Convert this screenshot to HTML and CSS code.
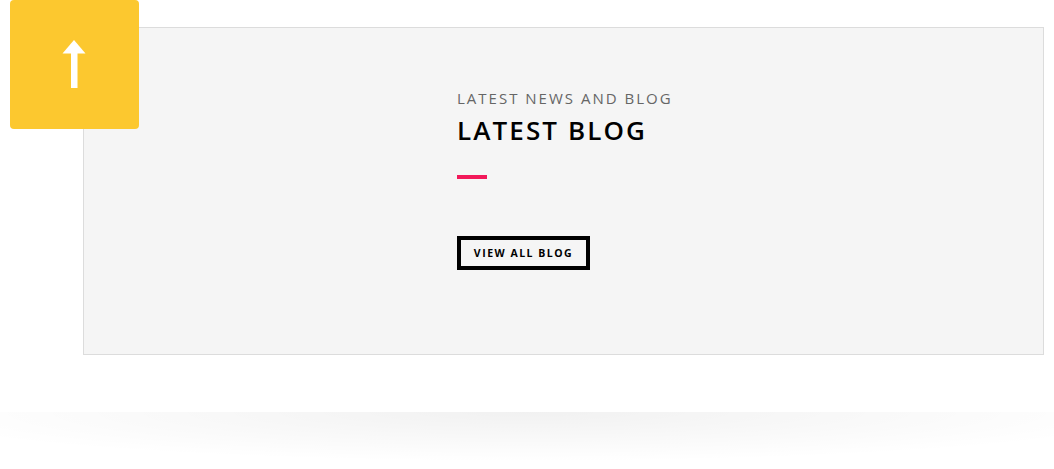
FILE: index.html
```html
<!DOCTYPE html>
<html>
<head>
<meta charset="utf-8">
<link rel="stylesheet" href="styles.css">
</head>
<body>
<div class="page">
  <a class="to-top" href="#">
    <svg width="129" height="129" viewBox="0 0 129 129">
      <polygon points="52.5,53.5 64,40 75.5,53.5" fill="#fff"/>
      <rect x="61" y="52" width="6.5" height="36" fill="#fff"/>
    </svg>
  </a>
  <section class="panel">
    <div class="panel-content">
      <p class="eyebrow">LATEST NEWS AND BLOG</p>
      <h2 class="title">LATEST BLOG</h2>
      <div class="accent"></div>
      <a class="btn" href="#">VIEW ALL BLOG</a>
    </div>
  </section>
  <div class="shadow"></div>
</div>
</body>
</html>
```
FILE: styles.css
```css
html, body {
  margin: 0;
  padding: 0;
  background: #fff;
}
body {
  font-family: "Open Sans", "Liberation Sans", sans-serif;
  width: 1054px;
  height: 469px;
  overflow: hidden;
}
.page {
  position: relative;
  padding-top: 27px;
}
.to-top {
  position: absolute;
  left: 10px;
  top: 0;
  width: 129px;
  height: 129px;
  background: #fcc82f;
  border-radius: 4px;
  display: block;
  z-index: 2;
}
.to-top svg {
  display: block;
}
.panel {
  margin-left: 83px;
  width: 959px;
  height: 326px;
  background: #f5f5f5;
  border: 1px solid #dcdcdc;
}
.panel-content {
  padding-left: 373px;
  padding-top: 60px;
  display: flex;
  flex-direction: column;
  align-items: flex-start;
}
.eyebrow {
  margin: 0;
  font-size: 15px;
  line-height: 20px;
  letter-spacing: 2px;
  color: #666;
}
.title {
  margin: 5px 0 0;
  font-size: 26px;
  line-height: 34px;
  font-weight: 600;
  letter-spacing: 2.1px;
  color: #000;
}
.accent {
  margin-top: 28px;
  width: 30px;
  height: 4px;
  background: #f2195a;
}
.btn {
  margin-top: 57px;
  box-sizing: border-box;
  width: 133px;
  height: 34px;
  border: 4px solid #000;
  display: flex;
  align-items: center;
  justify-content: center;
  font-size: 10.5px;
  font-weight: 700;
  letter-spacing: 1.5px;
  color: #000;
  text-decoration: none;
}
.shadow {
  margin-top: 57px;
  height: 50px;
  background: radial-gradient(ellipse 60% 100% at 50% 0%, rgba(0,0,0,0.055), rgba(0,0,0,0) 100%);
}
```
